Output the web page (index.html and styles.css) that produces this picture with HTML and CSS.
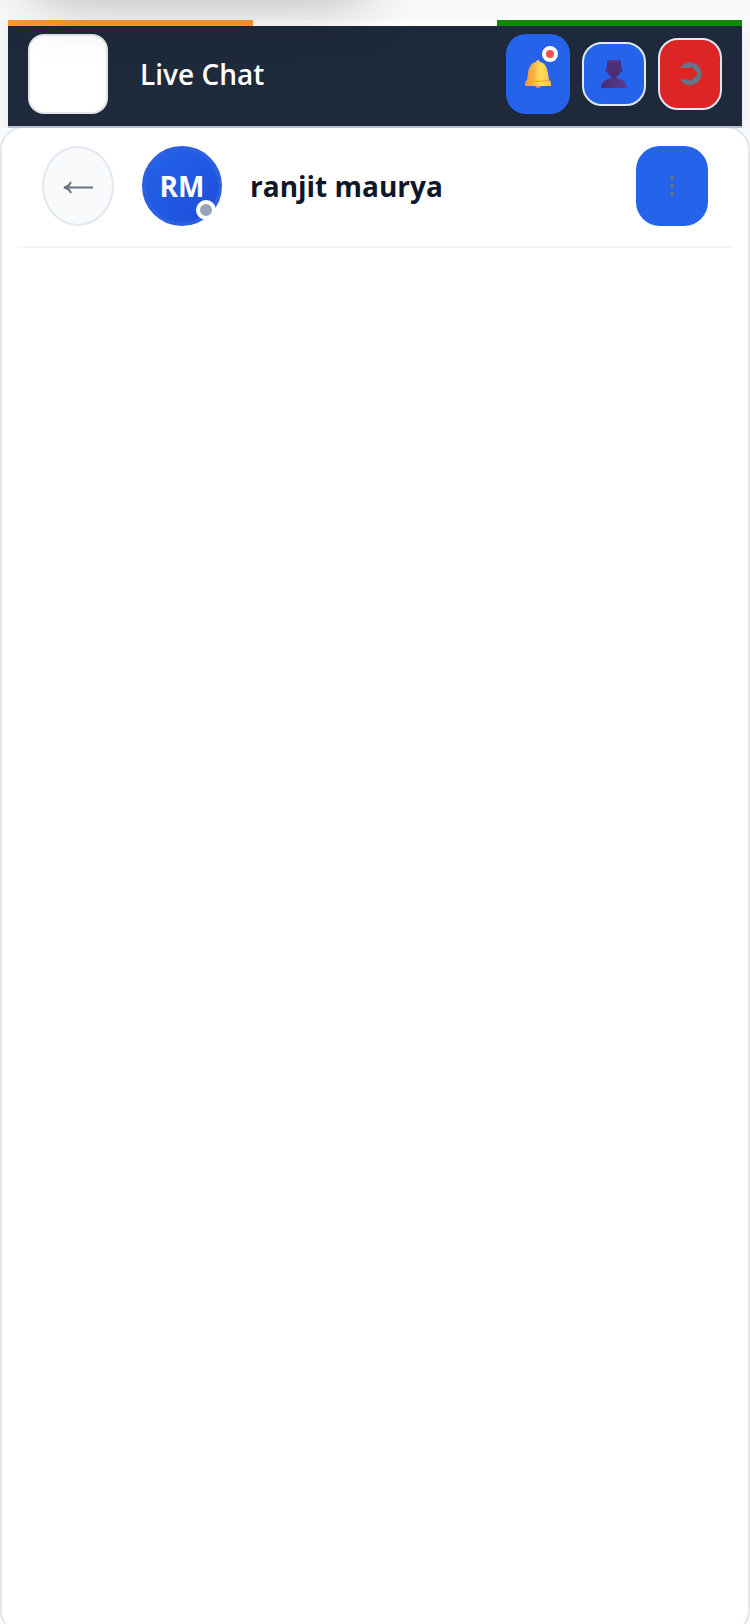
FILE: index.html
```html
<!DOCTYPE html>
<html lang="en">
<head>
<meta charset="utf-8">
<meta name="viewport" content="width=device-width, initial-scale=1">
<title>Live Chat</title>
<link rel="stylesheet" href="styles.css">
</head>
<body>
<div class="skip-shadow" aria-hidden="true"></div>
<header class="topbar">
  <div class="stripe"><span class="saffron"></span><span class="white"></span><span class="green"></span></div>
  <div class="topbar-row">
    <div class="logo"></div>
    <h1 class="title">Live Chat</h1>
    <button class="tool bell" type="button" aria-label="Notifications">
      <svg class="icon" viewBox="0 0 28 30" aria-hidden="true">
        <defs><linearGradient id="gold"><stop offset="0" stop-color="#f3923c"/><stop offset=".3" stop-color="#f9ad42"/><stop offset=".6" stop-color="#ffe05e"/><stop offset="1" stop-color="#fbbd42"/></linearGradient></defs>
        <circle cx="14" cy="26" r="3" fill="#f3824f"/>
        <path d="M14 1q1.500 0 2 2c5 1 7 5 8 11l1 7q2 1 2 3v3H1v-3q0-2 2-3l1-7c1-6 3-10 8-11q.5-2 2-2z" fill="url(#gold)"/>
        <path d="M3 21.500q11 2 22 0" fill="none" stroke="#f2a33a"/>
      </svg>
      <span class="alert-dot"></span>
    </button>
    <button class="tool user" type="button" aria-label="Profile">
      <svg class="icon" viewBox="0 0 28 30" aria-hidden="true">
        <defs><linearGradient id="violet"><stop offset="0" stop-color="#472b70"/><stop offset="1" stop-color="#5d3b92"/></linearGradient></defs>
        <path d="M1 29C1.500 23 6 20 11 19.500V16H17V19.500C22 20 26.500 23 27 29Z" fill="url(#violet)"/>
        <ellipse cx="7" cy="11" rx="1.500" ry="2" fill="#472b70"/>
        <ellipse cx="21" cy="11" rx="1.500" ry="2" fill="#472b70"/>
        <rect x="7" y="1" width="14" height="12" rx="3" fill="#4c2d78"/>
        <ellipse cx="14" cy="11" rx="7" ry="7" fill="#4c2d78"/>
        <path d="M9 3q5-2 10 0" fill="none" stroke="#6b3f93"/>
      </svg>
    </button>
    <button class="tool logout" type="button" aria-label="Log out">
      <svg class="icon" viewBox="0 0 28 30" aria-hidden="true">
        <path d="M4 9A11.500 11.500 0 1 1 4 20.500H14v2L22 15l-7-8v2z" fill="#64748b"/>
      </svg>
    </button>
  </div>
</header>
<main class="chat">
  <div class="chat-head">
    <button class="back" type="button" aria-label="Back">
      <svg class="arrow" viewBox="0 0 32 16" aria-hidden="true"><path d="M2 9.500H31M9 4Q7 8.500 2 9.500Q7 10.500 9 15" fill="none" stroke="#6b7280" stroke-width="2"/></svg>
    </button>
    <div class="avatar">RM<span class="presence"></span></div>
    <h2 class="name">ranjit maurya</h2>
    <button class="menu" type="button" aria-label="More options"><i></i><i></i><i></i></button>
  </div>
  <div class="messages"></div>
</main>
</body>
</html>
```
FILE: styles.css
```css
* { box-sizing: border-box; }
body {
  margin: 0;
  min-height: 100vh;
  display: flex;
  flex-direction: column;
  padding-top: 20px;
  overflow: hidden;
  background: #f8fafc;
  font-family: "Open Sans", "Noto Sans", sans-serif;
}
button { padding: 0; border: 0; font: inherit; }
.skip-shadow {
  position: fixed;
  z-index: 5;
  top: -80px;
  left: 32px;
  width: 336px;
  height: 60px;
  border-radius: 16px;
  box-shadow: 0 20px 60px rgba(0, 0, 0, 0.3);
  pointer-events: none;
}
.topbar {
  position: relative;
  z-index: 2;
  margin: 0 8px;
  background: #1e293b;
  border-bottom: 2px solid #b9c0cc;
  box-shadow: 0 4px 24px rgba(15, 23, 42, 0.08);
  clip-path: inset(0 -8px);
}
.stripe { display: flex; height: 6px; }
.stripe span { flex: 1; }
.saffron { background: #ff9933; }
.white { background: #ffffff; }
.green { background: #138808; }
.topbar-row {
  display: flex;
  align-items: center;
  gap: 12px;
  padding: 8px 20px 12px;
}
.logo {
  width: 80px;
  height: 80px;
  background: #ffffff;
  border: 2px solid #e4e5eb;
  border-radius: 16px;
}
.title {
  flex: 1;
  margin: 0 0 0 20px;
  color: #ffffff;
  font-size: 28px;
  line-height: 40px;
  font-weight: 600;
}
.tool {
  position: relative;
  display: flex;
  align-items: center;
  justify-content: center;
  width: 64px;
  background: #2563eb;
  border-radius: 20px;
}
.icon { width: 28px; height: 30px; }
.bell { height: 80px; }
.user { height: 64px; border: 2px solid #e2e8f0; }
.logout { height: 72px; border: 2px solid #e2e8f0; background: #dc2626; }
.alert-dot {
  position: absolute;
  top: 12px;
  right: 12px;
  width: 16px;
  height: 16px;
  border: 4px solid #ffffff;
  border-radius: 50%;
  background: #ff4d4f;
}
.chat {
  flex: 1 0 auto;
  display: flex;
  flex-direction: column;
  margin: -2px 0 -10px;
  padding: 0 16px;
  background: #ffffff;
  border: 2px solid #e2e8f0;
  border-radius: 24px;
}
.chat-head {
  display: flex;
  align-items: center;
  gap: 28px;
  padding: 18px 24px 20px;
  border-bottom: 2px solid #f1f5f9;
}
.back {
  display: flex;
  align-items: center;
  justify-content: center;
  width: 72px;
  height: 80px;
  background: #f8fafc;
  border: 2px solid #e2e8f0;
  border-radius: 50%;
}
.arrow { width: 32px; height: 16px; }
.avatar {
  position: relative;
  display: flex;
  align-items: center;
  justify-content: center;
  width: 80px;
  height: 80px;
  border: 4px solid #2d5fe3;
  border-radius: 50%;
  background: linear-gradient(135deg, #2563eb, #1d4ed8);
  color: #ffffff;
  font-size: 28px;
  font-weight: 700;
}
.presence {
  position: absolute;
  right: 2px;
  bottom: 2px;
  width: 20px;
  height: 20px;
  border: 4px solid #ffffff;
  border-radius: 50%;
  background: #94a3b8;
}
.name {
  flex: 1;
  margin: 0;
  color: #0f172a;
  font-size: 28px;
  line-height: 40px;
  font-weight: 700;
}
.menu {
  display: flex;
  flex-direction: column;
  align-items: center;
  justify-content: center;
  gap: 4px;
  width: 72px;
  height: 80px;
  background: #2563eb;
  border-radius: 24px;
}
.menu i { width: 4px; height: 4px; border-radius: 50%; background: #6b7280; }
.messages { flex: 1; }
```
